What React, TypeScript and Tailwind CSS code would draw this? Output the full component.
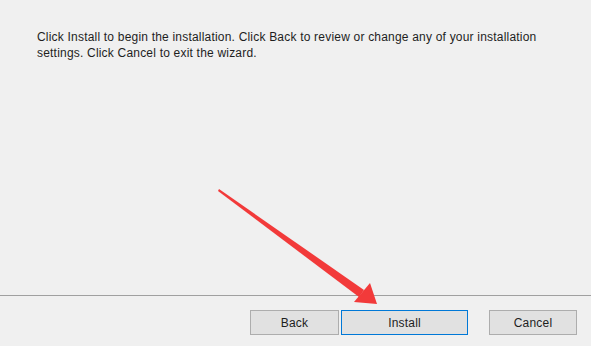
import React from 'react';

const App: React.FC = () => {
  return (
    <div
      className="relative flex flex-col w-[591px] h-[346px] bg-[#f0f0f0] overflow-hidden"
      style={{ fontFamily: 'Tahoma, "Liberation Sans", Arial, sans-serif' }}
    >
      <div className="flex-1 pt-[29px] pl-[37px] pr-[30px]">
        <p className="text-[12px] leading-[16px] tracking-[0.2px] text-[#1e1e1e]">
          Click Install to begin the installation. Click Back to review or change any of your installation
          settings. Click Cancel to exit the wizard.
        </p>
      </div>

      <div className="h-[51px] border-t border-[#a0a0a0] flex items-start justify-end pt-[14px] pr-[14px]">
        <button className="w-[89px] h-[25px] bg-[#e1e1e1] border border-[#adadad] text-[12px] tracking-[0.2px] text-[#1e1e1e]">
          Back
        </button>
        <button className="ml-[2px] w-[127px] h-[25px] bg-[#e1e1e1] border border-[#0078d7] text-[12px] tracking-[0.2px] text-[#1e1e1e]">
          Install
        </button>
        <button className="ml-[21px] w-[88px] h-[25px] bg-[#e1e1e1] border border-[#adadad] text-[12px] tracking-[0.2px] text-[#1e1e1e]">
          Cancel
        </button>
      </div>

      {/* red annotation arrow */}
      <svg className="absolute left-0 top-0 pointer-events-none" width="591" height="346" viewBox="0 0 591 346">
        <polygon points="219,189 364,290 359,297 218,191" fill="#f23a3a" />
        <polygon points="377,304 354,302 370,283" fill="#f23a3a" />
      </svg>
    </div>
  );
};

export default App;
